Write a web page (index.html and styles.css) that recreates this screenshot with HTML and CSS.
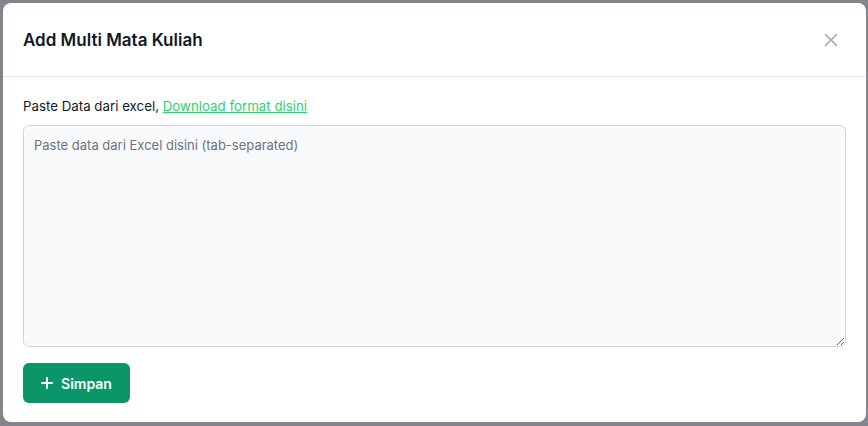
FILE: index.html
```html
<!DOCTYPE html>
<html lang="id">
<head>
    <meta charset="UTF-8">
    <meta name="viewport" content="width=device-width, initial-scale=1.0">
    <title>Add Multi Mata Kuliah</title>
    <link rel="stylesheet" href="styles.css">
</head>
<body>
    <div class="modal">
        <div class="modal-header">
            <h3>Add Multi Mata Kuliah</h3>
            <button class="close" type="button" aria-label="Close">
                <svg width="14" height="14" viewBox="0 0 14 14" fill="none" stroke="currentColor" stroke-width="1.5" stroke-linecap="round">
                    <path d="M1.5 1.5 L12.5 12.5 M12.5 1.5 L1.5 12.5"/>
                </svg>
            </button>
        </div>
        <div class="modal-body">
            <label for="paste">Paste Data dari excel, <a href="#">Download format disini</a></label>
            <textarea id="paste" placeholder="Paste data dari Excel disini (tab-separated)"></textarea>
            <button class="btn-save" type="button">
                <svg width="12" height="12" viewBox="0 0 12 12" fill="none" stroke="currentColor" stroke-width="2" stroke-linecap="round">
                    <path d="M6 1 V11 M1 6 H11"/>
                </svg>
                Simpan
            </button>
        </div>
    </div>
</body>
</html>
```

FILE: styles.css
```css
body {
    margin: 0;
    padding: 3px 2px 4px 3px;
    background: #82858b;
    font-family: Inter, "Noto Sans", sans-serif;
    height: 100vh;
    box-sizing: border-box;
    overflow: hidden;
}

.modal {
    background: #fff;
    border-radius: 8px;
    height: 419px;
    box-sizing: border-box;
}

.modal-header {
    display: flex;
    justify-content: space-between;
    align-items: center;
    height: 74px;
    padding: 0 20px;
    border-bottom: 1px solid #e5e7eb;
    box-sizing: border-box;
}

.modal-header h3 {
    margin: 0;
    font-size: 17px;
    font-weight: 600;
    color: #111827;
}

.close {
    background: none;
    border: none;
    padding: 0;
    margin-right: 8px;
    color: #9ca3af;
    display: flex;
    cursor: pointer;
}

.modal-body {
    padding: 20px 20px 20px;
}

label {
    display: block;
    font-size: 13.3px;
    color: #111827;
    margin-bottom: 10px;
    line-height: 18px;
}

label a {
    color: #2dd36f;
    text-decoration: underline;
}

textarea {
    display: block;
    width: 100%;
    height: 222px;
    box-sizing: border-box;
    background: #f9fafb;
    border: 1px solid #d1d5db;
    border-radius: 6px;
    padding: 11px 10px;
    font-family: inherit;
    font-size: 13px;
    color: #111827;
    margin-bottom: 16px;
}

textarea::placeholder {
    color: #6b7280;
}

.btn-save {
    display: flex;
    align-items: center;
    gap: 8px;
    height: 40px;
    width: 107px;
    justify-content: center;
    background: #0b9669;
    color: #fff;
    border: none;
    border-radius: 6px;
    font-family: inherit;
    font-size: 14px;
    font-weight: 600;
    cursor: pointer;
}
```
